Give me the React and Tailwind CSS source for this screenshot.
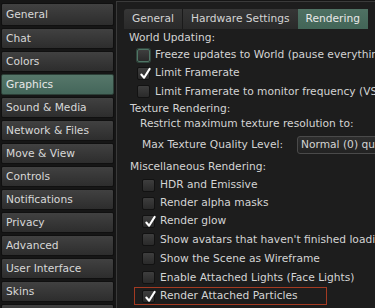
import React from "react";

const FONT = { fontFamily: '"DejaVu Sans", "Liberation Sans", sans-serif' };

const sideItems = [
  "General",
  "Chat",
  "Colors",
  "Graphics",
  "Sound & Media",
  "Network & Files",
  "Move & View",
  "Controls",
  "Notifications",
  "Privacy",
  "Advanced",
  "User Interface",
  "Skins",
  "",
];

function Check() {
  return (
    <svg
      viewBox="0 0 14 14"
      className="absolute left-[1px] top-[-1px] w-[13px] h-[14px]"
    >
      <path
        d="M2.5 7.5 L5.5 11 L11.5 1.5"
        fill="none"
        stroke="#ffffff"
        strokeWidth="2.2"
        strokeLinecap="round"
        strokeLinejoin="round"
      />
    </svg>
  );
}

function Box({ checked, focus }) {
  return (
    <div
      className={
        "relative w-[13px] h-[13px] rounded-[2px] border shrink-0 bg-gradient-to-b from-[#3e3e3e] to-[#2a2a2a] " +
        (focus ? "border-[#4f7565] ring-1 ring-[#31463d]" : "border-[#121212]")
      }
    >
      {checked && <Check />}
    </div>
  );
}

function CheckRow({ label, checked, focus, h, indent, gap }) {
  return (
    <div className={"flex items-center " + h + " " + indent + " " + gap}>
      <Box checked={checked} focus={focus} />
      <span className="whitespace-nowrap">{label}</span>
    </div>
  );
}

export default function App() {
  return (
    <div
      className="w-[375px] h-[308px] overflow-hidden bg-[#161616] flex text-[10.67px] text-[#d4d4d4]"
      style={FONT}
    >
      {/* Sidebar */}
      <div className="w-[116px] shrink-0 pl-[1px] pt-[3px] flex flex-col gap-[2px]">
        {sideItems.map((s, i) => (
          <div
            key={i}
            className={
              "w-[113px] shrink-0 rounded-[2px] border flex items-center pl-[4px] whitespace-nowrap " +
              (i === 0 ? "h-[23px] " : "h-[21px] ") +
              (s === "Graphics"
                ? "bg-gradient-to-b from-[#56776a] to-[#44665a] border-[#2c3f37] text-[#e8e8e8]"
                : "bg-gradient-to-b from-[#414141] to-[#2d2d2d] border-[#101010] text-[#d8d8d8]")
            }
          >
            {s}
          </div>
        ))}
      </div>

      {/* Right panel */}
      <div className="flex-1 mt-[1px] border-l border-t border-[#3a3a3a] bg-[#1d1d1d] flex flex-col overflow-hidden">
        {/* Tabs */}
        <div className="flex pl-[7px] pt-[7px] h-[28px] shrink-0">
          <div className="h-[20px] px-[8px] flex items-center bg-gradient-to-b from-[#363636] to-[#2a2a2a] rounded-tl-[3px] border-r border-[#1a1a1a] whitespace-nowrap">
            General
          </div>
          <div className="h-[20px] px-[8px] flex items-center bg-gradient-to-b from-[#363636] to-[#2a2a2a] whitespace-nowrap">
            Hardware Settings
          </div>
          <div className="h-[20px] px-[8px] flex items-center bg-gradient-to-b from-[#4f7163] to-[#426557] text-[#e8e8e8] whitespace-nowrap">
            Rendering
          </div>
        </div>

        {/* Content */}
        <div className="flex flex-col">
          <div className="h-[16px] flex items-center pl-[12px]">World Updating:</div>
          <CheckRow
            label="Freeze updates to World (pause everything)"
            focus
            h="h-[18px]"
            indent="pl-[20px]"
            gap="gap-[5px]"
          />
          <CheckRow
            label="Limit Framerate"
            checked
            h="h-[18px]"
            indent="pl-[20px]"
            gap="gap-[5px]"
          />
          <CheckRow
            label="Limit Framerate to monitor frequency (VSync)"
            h="h-[19px]"
            indent="pl-[20px]"
            gap="gap-[5px]"
          />
          <div className="h-[16px] flex items-center pl-[13px]">Texture Rendering:</div>
          <div className="h-[14px] flex items-center pl-[23px] whitespace-nowrap">
            Restrict maximum texture resolution to:
          </div>
          <div className="h-[27px] flex items-center pl-[25px] whitespace-nowrap">
            <span className="w-[155px] shrink-0">Max Texture Quality Level:</span>
            <div className="h-[18px] w-[120px] shrink-0 rounded-[3px] border border-[#4a4a4a] bg-gradient-to-b from-[#2e2e2e] to-[#222222] flex items-center pl-[3px]">
              Normal (0) quality
            </div>
          </div>
          <div className="h-[18px] flex items-center pl-[13px] whitespace-nowrap">
            Miscellaneous Rendering:
          </div>
          <CheckRow label="HDR and Emissive" h="h-[18px]" indent="pl-[25px]" gap="gap-[5px]" />
          <CheckRow label="Render alpha masks" h="h-[18px]" indent="pl-[25px]" gap="gap-[5px]" />
          <CheckRow label="Render glow" checked h="h-[18px]" indent="pl-[25px]" gap="gap-[5px]" />
          <CheckRow
            label="Show avatars that haven't finished loading"
            h="h-[19px]"
            indent="pl-[25px]"
            gap="gap-[5px]"
          />
          <CheckRow
            label="Show the Scene as Wireframe"
            h="h-[19px]"
            indent="pl-[25px]"
            gap="gap-[5px]"
          />
          <CheckRow
            label="Enable Attached Lights (Face Lights)"
            h="h-[19px]"
            indent="pl-[25px]"
            gap="gap-[5px]"
          />
          <div className="pl-[17px]">
            <div className="w-[193px] h-[18px] border border-[#a33a22] flex items-center pl-[7px] gap-[5px]">
              <Box checked />
              <span className="whitespace-nowrap">Render Attached Particles</span>
            </div>
          </div>
        </div>
      </div>
    </div>
  );
}
